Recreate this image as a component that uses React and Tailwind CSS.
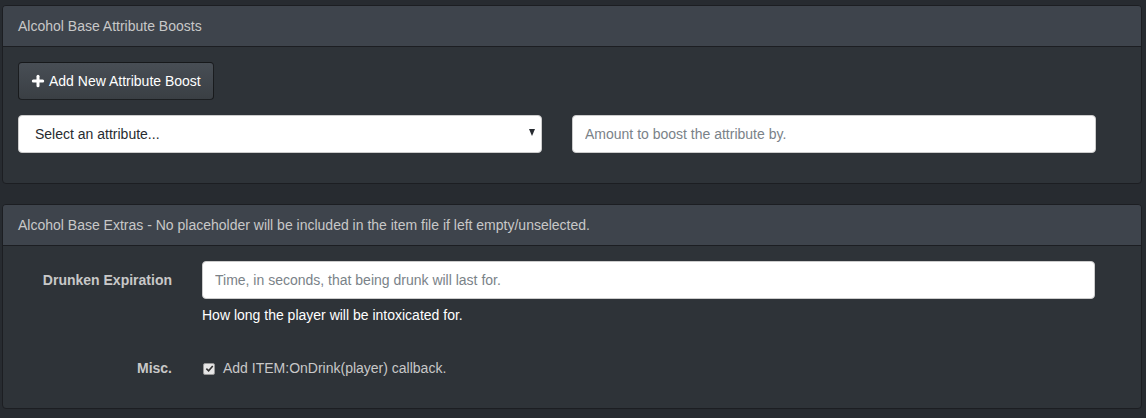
import { Plus } from "lucide-react";

const FONT = { fontFamily: '"Liberation Sans", Arial, sans-serif' };

const INPUT_CLASS =
  "h-[38px] rounded-[4px] border border-[#cccccc] bg-white px-3 text-[14px] text-[#272b30] " +
  "placeholder:text-[#7a8288] focus:outline-none";

function Panel({ title, className = "", children }) {
  return (
    <div
      className={`mx-[2px] w-[1140px] overflow-hidden rounded-[4px] border border-[#1c1e22] bg-[#2e3338] ${className}`}
    >
      <div className="flex h-[41px] items-center border-b border-[#1c1e22] bg-[#3e444c] px-[15px] text-[14px] text-[#c8c8c8]">
        {title}
      </div>
      {children}
    </div>
  );
}

export default function App() {
  return (
    <div className="min-h-[418px] bg-[#272b30] pt-[5px]" style={FONT}>
      {/* Attribute boosts */}
      <Panel title="Alcohol Base Attribute Boosts" className="h-[179px]">
        <div className="px-[15px] pt-[15px]">
          <button
            type="button"
            className="flex h-[38px] w-[196px] items-center gap-[3px] rounded-[4px] border border-black/60 bg-gradient-to-b from-[#484e55] to-[#3a3f44] pl-[11px] text-[14px] text-white"
          >
            <Plus size={16} strokeWidth={4.5} />
            Add New Attribute Boost
          </button>
          <div className="mt-[15px] flex gap-[30px]">
            <div className={`${INPUT_CLASS} relative flex w-[524px] items-center pl-[16px]`}>
              <span className="text-[#272b30]">Select an attribute...</span>
              <span className="absolute right-[6px] top-[13px] h-0 w-0 border-x-[3.5px] border-t-[7px] border-x-transparent border-t-[#272b30]" />
            </div>
            <input
              className={`${INPUT_CLASS} w-[524px]`}
              placeholder="Amount to boost the attribute by."
            />
          </div>
        </div>
      </Panel>

      {/* Extras */}
      <Panel
        title="Alcohol Base Extras - No placeholder will be included in the item file if left empty/unselected."
        className="mt-[20px] h-[205px]"
      >
        <div className="pt-[15px]">
          <div className="flex">
            <label className="w-[169px] pt-[9px] text-right text-[14px] font-bold text-[#c8c8c8]">
              Drunken Expiration
            </label>
            <div className="ml-[30px]">
              <input
                className={`${INPUT_CLASS} w-[893px]`}
                placeholder="Time, in seconds, that being drunk will last for."
              />
              <p className="mt-[6px] text-[14px] leading-[20px] text-white">
                How long the player will be intoxicated for.
              </p>
            </div>
          </div>
          <div className="mt-[33px] flex items-center">
            <span className="w-[169px] text-right text-[14px] font-bold text-[#c8c8c8]">Misc.</span>
            <label className="ml-[31px] flex items-center gap-[8px] text-[14px] text-[#c8c8c8]">
              <span className="flex h-[12px] w-[12px] items-center justify-center rounded-[2px] border border-[#999] bg-[#e6e6e6]">
                <svg viewBox="0 0 10 10" className="h-[9px] w-[9px]">
                  <path d="M1.5 5.2 L4 7.6 L8.6 2.2" fill="none" stroke="#333" strokeWidth="1.8" />
                </svg>
              </span>
              Add ITEM:OnDrink(player) callback.
            </label>
          </div>
        </div>
      </Panel>
    </div>
  );
}
